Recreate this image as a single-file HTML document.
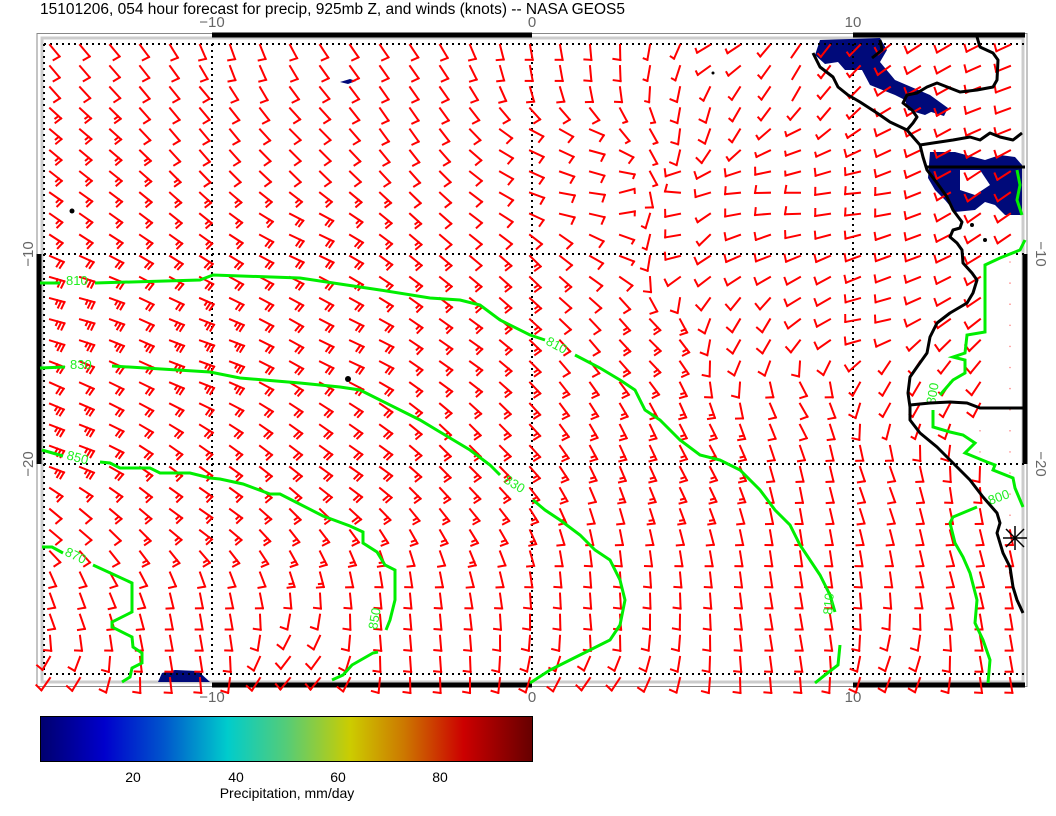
<!DOCTYPE html>
<html><head><meta charset="utf-8"><style>
html,body{margin:0;padding:0;background:#fff;width:1056px;height:816px;overflow:hidden}
svg{display:block}
</style></head><body>
<svg id="s" width="1056" height="816" xmlns="http://www.w3.org/2000/svg" font-family="Liberation Sans, sans-serif">
<rect width="1056" height="816" fill="#fff"/>
<text x="40" y="14" font-size="15.5" fill="#000">15101206, 054 hour forecast for precip, 925mb Z, and winds (knots) -- NASA GEOS5</text>
<g font-size="15" fill="#666" text-anchor="middle">
<text x="212" y="27">−10</text><text x="532" y="27">0</text><text x="853" y="27">10</text>
<text x="212" y="702">−10</text><text x="532" y="702">0</text><text x="853" y="702">10</text>
<text transform="translate(33,254) rotate(-90)">−10</text>
<text transform="translate(33,464) rotate(-90)">−20</text>
<text transform="translate(1036,254) rotate(90)">−10</text>
<text transform="translate(1036,464) rotate(90)">−20</text>
</g>
<rect x="37" y="33.5" width="990" height="653" fill="none" stroke="#888" stroke-width="1"/>
<rect x="42" y="38" width="981" height="644" fill="none" stroke="#ccc" stroke-width="3"/>
<g stroke="#000" stroke-width="5">
<line x1="212" y1="35" x2="532" y2="35"/><line x1="853" y1="35" x2="1025" y2="35"/>
<line x1="212" y1="685" x2="532" y2="685"/><line x1="853" y1="685" x2="1025" y2="685"/>
<line x1="39" y1="254" x2="39" y2="464"/><line x1="1025" y1="254" x2="1025" y2="464"/>
</g>
<g fill="#000a7a">
<path d="M820,40 L880,38 L887,50 L880,62 L895,80 L930,95 L948,108 L944,116 L925,110 L895,95 L870,85 L862,70 L845,70 L838,62 L825,64 L815,55 Z"/>
<path d="M905,100 L925,102 L935,110 L925,115 L908,110 Z"/>
<path d="M930,152 L955,152 L985,160 L1000,155 L1015,157 L1022,165 L1022,215 L1005,215 L995,205 L985,202 L975,210 L955,212 L945,200 L935,190 L928,178 Z"/>
<path d="M158,682 L162,673 L175,670 L198,671 L210,682 Z"/>
<path d="M340,82 L350,79 L356,81 L348,84 Z"/>
</g>
<g fill="#fff"><path d="M960,170 L980,170 L990,185 L975,195 L960,190 Z"/></g>
<g stroke="#000" stroke-width="2" stroke-dasharray="2,4" fill="none">
<line x1="44" y1="44" x2="1025" y2="44"/><line x1="44" y1="254" x2="1025" y2="254"/>
<line x1="44" y1="464" x2="1025" y2="464"/><line x1="44" y1="674" x2="1025" y2="674"/>
<line x1="44" y1="44" x2="44" y2="674"/><line x1="212" y1="44" x2="212" y2="674"/>
<line x1="532" y1="44" x2="532" y2="674"/><line x1="853" y1="44" x2="853" y2="674"/>
</g>
<g id="barbs" stroke="#f00" stroke-width="2" fill="none" stroke-linecap="square"></g>
<g stroke="#00ee00" stroke-width="3" fill="none" stroke-linejoin="miter">
<polyline points="40,283 60,283"/>
<polyline points="95,283 200,280 213,275 300,278 380,290 430,298 460,300 480,305 500,320 530,335 545,340"/>
<polyline points="575,355 600,368 620,380 635,390 645,410 660,420 680,440 700,455 720,460 740,470 760,490 775,510 790,525 800,545 820,575 830,595 835,612"/>
<polyline points="840,645 838,665 825,675 815,683"/>
<polyline points="40,368 65,367"/>
<polyline points="112,366 210,372 240,378 300,383 340,387 360,390 380,400 400,410 420,420 440,432 470,450 490,465 500,475"/>
<polyline points="533,500 545,510 560,520 580,535 595,550 610,560 620,580 625,600 620,625 610,640 590,650 570,660 550,670 530,683"/>
<polyline points="42,450 63,456"/>
<polyline points="100,462 110,463 120,468 150,468 160,473 190,473 210,478 220,479 243,484 270,494 280,494 323,516 350,526 363,532 363,543 377,552 385,565 395,570 395,600 390,620 386,630"/>
<polyline points="378,652 373,653 352,665 343,675 332,680"/>
<polyline points="42,547 52,547 63,553"/>
<polyline points="93,565 132,583 132,612 112,622 112,627 132,637 133,647 142,653 142,663 132,668 130,677 122,682"/>
<polyline points="1025,240 1020,250 1000,258 985,265 985,332 967,335 965,353 953,357 965,360 965,373 953,380 940,395"/>
<polyline points="933,410 933,427 950,432 963,435 975,443 965,453 987,462 995,465 993,470 1013,478 1015,488 1023,507"/>
<polyline points="977,507 953,517 950,523 955,543 963,557 970,573 977,600 975,623 983,640 990,660 988,683"/>
<polyline points="1017,170 1020,185 1017,200 1022,215"/>
</g>
<g fill="#22ee22" font-size="13">
<text x="66" y="285">810</text>
<text transform="translate(545,344) rotate(28)">810</text>
<text x="70" y="369">830</text>
<text transform="translate(503,482) rotate(32)">830</text>
<text transform="translate(66,459) rotate(15)">850</text>
<text transform="translate(377,630) rotate(-80)">850</text>
<text transform="translate(64,555) rotate(25)">870</text>
<text transform="translate(832,615) rotate(-85)">810</text>
<text transform="translate(935,405) rotate(-80)">800</text>
<text transform="translate(990,505) rotate(-20)">800</text>
</g>
<g stroke="#000" stroke-width="3" fill="none" stroke-linejoin="round">
<polyline points="813,53 820,67 833,77 838,87 848,95 860,102 877,113 890,122 907,130 913,137 920,145 923,157 927,170 937,183 947,197 953,210 962,222 960,228 953,230 950,237 957,243 962,250 963,263 972,273 977,280 973,293 967,303 950,313 937,323 930,337 927,353 917,367 910,377 908,393 910,407 910,420 920,433 937,447 957,467 970,480 983,497 997,513 1000,523 997,533 1003,553 1010,567 1013,587 1017,600 1023,613"/>
<polyline points="977,37 980,47 993,53 998,60 997,80 993,87 977,90 960,92 937,83 927,87 917,93 907,95 903,103 912,110 917,117 913,123 907,130"/>
<polyline points="920,145 933,143 953,140 970,137 980,140 990,133 1000,137 1013,140 1022,133"/>
<polyline points="925,167 1025,167"/>
<polyline points="910,405 930,403 950,402 967,403 980,408 1025,408"/>
<polyline points="880,40 882,50 872,58"/>
</g>
<g stroke="#000" stroke-width="1.5"><line x1="1003" y1="538" x2="1027" y2="538"/><line x1="1015" y1="526" x2="1015" y2="550"/><line x1="1006" y1="529" x2="1024" y2="547"/><line x1="1024" y1="529" x2="1006" y2="547"/></g>
<g fill="#000"><circle cx="72" cy="211" r="2.5"/><circle cx="348" cy="379" r="3"/><circle cx="713" cy="73" r="1.5"/><circle cx="972" cy="225" r="2"/><circle cx="985" cy="240" r="2"/></g>
<defs><linearGradient id="cb" x1="0" x2="1" y1="0" y2="0">
<stop offset="0" stop-color="#00006e"/><stop offset="0.13" stop-color="#0000cc"/><stop offset="0.25" stop-color="#0055cc"/>
<stop offset="0.38" stop-color="#00cccc"/><stop offset="0.5" stop-color="#55cc77"/><stop offset="0.63" stop-color="#cccc00"/>
<stop offset="0.74" stop-color="#cc7700"/><stop offset="0.86" stop-color="#cc0000"/><stop offset="1" stop-color="#660000"/>
</linearGradient></defs>
<rect x="40.5" y="716.5" width="492" height="45" fill="url(#cb)" stroke="#000" stroke-width="1"/>
<g font-size="14" fill="#000" text-anchor="middle">
<text x="133" y="782">20</text><text x="236" y="782">40</text><text x="338" y="782">60</text><text x="440" y="782">80</text>
<text x="287" y="798">Precipitation, mm/day</text>
</g>
</svg>
<script>
(function(){
var A=[
[50,50,50,1],[230,50,70,1],[60,150,40,1.5],[60,200,35,1.5],[200,100,50,1],[400,100,55,1],[300,150,45,1],
[60,300,15,2.5],[200,350,20,2.5],[350,350,25,2],[450,350,35,1.5],[300,240,25,2],[60,450,20,2.5],[350,450,35,2],
[480,450,45,1.5],[200,500,35,1.5],[60,520,40,1],[60,600,70,1],[200,620,80,1],[400,620,85,1],[600,620,85,1],
[800,620,80,1],[50,683,125,1],[300,683,130,1],[600,683,125,1],[900,683,110,1],[700,450,62,1.5],[650,340,45,1.5],
[540,60,80,1],[600,60,85,1],[650,60,100,0.5],[720,50,150,0.5],[540,150,25,1],[600,150,15,1],[640,130,60,0.5],
[690,110,100,1],[740,110,120,0.5],[560,200,10,1],[620,200,-15,0.5],[680,200,185,1],[760,200,180,1],[620,240,20,0.5],
[680,240,175,1],[560,240,35,1],[690,230,120,0.5],[760,240,160,1],[540,260,45,1.5],[800,80,120,0],[830,100,130,0.5],
[800,150,160,0.5],[800,200,180,1],[870,200,175,1],[900,250,160,1],[930,100,150,1],[1000,100,160,1],[990,200,145,1],
[900,150,155,1],[870,320,170,1],[900,380,120,0.5],[800,400,60,1],[880,480,70,1],[960,560,75,1],[1000,650,80,1],
[760,330,120,1],[820,300,150,1]];
var g=document.getElementById('barbs'),h='';
function land(x,y){return (x>985&&y>255&&y<470)||(x>1000&&y>470&&y<520)||((x>940&&y>410&&y<460)&&x>975);}
for(var r=0;r<31;r++){for(var c=0;c<33;c++){
 var x=50+30*c,y=45+21.1*r;
 if(land(x,y)){h+='<circle cx="'+x+'" cy="'+(y+6)+'" r="0.8" fill="#f88" stroke="none"/>';continue;}
 var sx=0,sy=0,sn=0,sw=0;
 for(var i=0;i<A.length;i++){var dx=x-A[i][0],dy=y-A[i][1],d=dx*dx+dy*dy+1,w=1/Math.pow(d,1.5);
  var t=A[i][2]*Math.PI/180;sx+=w*Math.cos(t);sy+=w*Math.sin(t);sn+=w*A[i][3];sw+=w;}
 var a=Math.atan2(sy,sx),n=Math.round(sn/sw*2)/2;
 var L=15,ux=Math.cos(a),uy=Math.sin(a),tx=x+L*ux,ty=y+L*uy;
 h+='<line x1="'+x.toFixed(1)+'" y1="'+y.toFixed(1)+'" x2="'+tx.toFixed(1)+'" y2="'+ty.toFixed(1)+'"/>';
 var fa=a+100*Math.PI/180,fx=Math.cos(fa),fy=Math.sin(fa),k=0;
 while(n>0.01){var len=n>=1?7:4,bx=tx-ux*3.5*k,by=ty-uy*3.5*k;
  h+='<line x1="'+bx.toFixed(1)+'" y1="'+by.toFixed(1)+'" x2="'+(bx+fx*len).toFixed(1)+'" y2="'+(by+fy*len).toFixed(1)+'"/>';
  n-=1;k++;}
}}
g.innerHTML=h;
})();
</script>
</body></html>
